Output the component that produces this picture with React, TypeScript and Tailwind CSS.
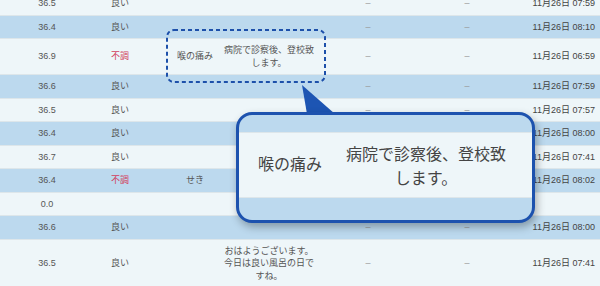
import React from 'react';

type Row = {
  temp: string;
  status?: string;
  symptom?: string;
  comment?: string[];
  dash?: boolean;
  time?: string;
};

const rows: Row[] = [
  { temp: '36.5', status: '良い', dash: true, time: '11月26日 07:59' },
  { temp: '36.4', status: '良い', dash: true, time: '11月26日 08:10' },
  { temp: '36.9', status: '不調', symptom: '喉の痛み', comment: ['病院で診察後、登校致', 'します。'], dash: true, time: '11月26日 06:59' },
  { temp: '36.6', status: '良い', dash: true, time: '11月26日 07:59' },
  { temp: '36.5', status: '良い', dash: true, time: '11月26日 07:57' },
  { temp: '36.4', status: '良い', dash: true, time: '11月26日 08:00' },
  { temp: '36.7', status: '良い', dash: true, time: '11月26日 07:41' },
  { temp: '36.4', status: '不調', symptom: 'せき', dash: true, time: '11月26日 08:02' },
  { temp: '0.0' },
  { temp: '36.6', status: '良い', dash: true, time: '11月26日 08:00' },
  { temp: '36.5', status: '良い', comment: ['おはようございます。', '今日は良い風呂の日で', 'すね。'], dash: true, time: '11月26日 07:41' },
];

const font = { fontFamily: '"Liberation Sans", "Noto Sans CJK JP", sans-serif' };

export default function App() {
  return (
    <div className="relative h-[286px] w-[600px] overflow-hidden bg-[#eef6f9] text-[9px] text-[#555]" style={font}>
      {/* table */}
      <div className="-mt-[8px] flex flex-col">
        {rows.map((r, i) => (
          <div
            key={i}
            className={`grid min-h-[23px] grid-cols-[94px_52px_73px_100px_98px_100px_1fr] items-center border-b border-[#dde6ea] py-[5px] leading-[12.5px] ${
              i % 2 === 1 ? 'bg-[#bcd9ee]' : 'bg-[#eef6f9]'
            }`}
          >
            <div className="text-center">{r.temp}</div>
            <div className={`text-center ${r.status === '不調' ? 'text-[#d2405e]' : 'text-[#555]'}`}>{r.status}</div>
            <div className="pl-[25px] text-center">{r.symptom}</div>
            <div className="text-center">
              {r.comment?.map((l, j) => (
                <div key={j}>{l}</div>
              ))}
            </div>
            <div className="text-center text-[#999]">{r.dash ? '–' : ''}</div>
            <div className="text-center text-[#999]">{r.dash ? '–' : ''}</div>
            <div className="pr-[5px] text-right text-[#444]">{r.time}</div>
          </div>
        ))}
      </div>

      {/* dashed highlight */}
      <svg className="absolute left-[166px] top-[29px]" width="160" height="54" viewBox="0 0 160 54">
        <rect x="1" y="1" width="158" height="52" rx="7" fill="none" stroke="#1d50aa" strokeWidth="2" strokeDasharray="4 3" />
      </svg>

      {/* pointer */}
      <svg className="absolute left-0 top-0" width="600" height="286" viewBox="0 0 600 286">
        <polygon points="302,85 307,114 335,114" fill="#1d55b3" />
      </svg>

      {/* zoomed callout */}
      <div className="absolute left-[236px] top-[112px] flex h-[111px] w-[299px] flex-col overflow-hidden rounded-[16px] border-[3px] border-[#1d52ae] bg-[#bcd9ee] shadow-[2px_4px_8px_rgba(0,0,0,0.3)]">
        <div className="h-[18px] shrink-0 border-b border-[#dde6ea]" />
        <div className="flex h-[65px] shrink-0 items-center border-b border-[#dde6ea] bg-[#eef6f9] text-[16px] leading-[24px] text-[#444]">
          <div className="w-[103px] shrink-0 pl-[19px]">喉の痛み</div>
          <div className="w-[168px] shrink-0 pt-[3px] text-center">
            <div>病院で診察後、登校致</div>
            <div>します。</div>
          </div>
        </div>
        <div className="flex-1" />
      </div>
    </div>
  );
}
